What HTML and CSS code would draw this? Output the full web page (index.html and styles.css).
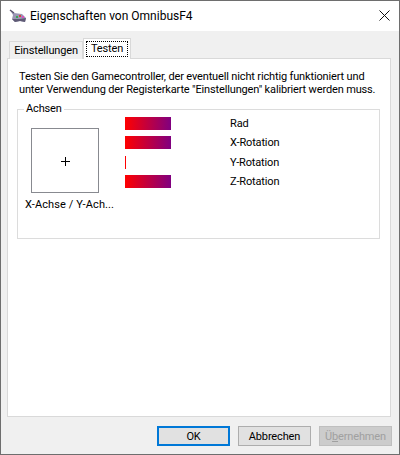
FILE: index.html
```html
<!DOCTYPE html>
<html lang="de">
<head>
  <meta charset="UTF-8">
  <meta name="viewport" content="width=device-width, initial-scale=1.0">
  <title>Eigenschaften von OmnibusF4</title>
  <link rel="stylesheet" href="styles.css">
</head>
<body>
  <div class="window">

    <div class="titlebar">
      <svg class="app_icon" width="18" height="15" viewBox="0 0 18 15">
        <path d="M1 1 L5 4 L13 5 L17 9 L16 13 L11 12 L6 13 L3 10 L4 6 Z" fill="#9a96b4"/>
        <path d="M3 10 L6 13 L11 12 L16 13 L17 9 L11 10 Z" fill="#5f5b75"/>
        <path d="M1 1 L5 4" stroke="#55506b" stroke-width="1.4"/>
        <rect x="7" y="7" width="2" height="2" fill="#3aa655"/>
        <rect x="10" y="6" width="2" height="2" fill="#d8433f"/>
        <rect x="13" y="7" width="2" height="2" fill="#d84fc0"/>
      </svg>
      <span class="title">Eigenschaften von OmnibusF4</span>
      <svg class="close" width="11" height="11" viewBox="0 0 11 11">
        <path d="M0.5 0.5 L10.5 10.5 M10.5 0.5 L0.5 10.5" stroke="#111" stroke-width="1" fill="none"/>
      </svg>
    </div>

    <div class="content">
      <div class="tabs">
        <div class="tab">Einstellungen</div>
        <div class="tab active"><span class="focus">Testen</span></div>
      </div>

      <div class="panel">
        <p class="intro">Testen Sie den Gamecontroller, der eventuell nicht richtig funktioniert und<br>unter Verwendung der Registerkarte "Einstellungen" kalibriert werden muss.</p>

        <fieldset class="group">
          <legend>Achsen</legend>
          <div class="axes">
            <div class="stick">
              <div class="stick_box">
                <svg width="9" height="9" viewBox="0 0 9 9">
                  <path d="M4.5 0 V9 M0 4.5 H9" stroke="#000" stroke-width="1"/>
                </svg>
              </div>
              <div class="stick_label">X-Achse / Y-Ach...</div>
            </div>
            <div class="sliders">
              <div class="bar_track"><div class="bar" style="width: 46px"></div></div>
              <div class="slider_label">Rad</div>
              <div class="bar_track"><div class="bar" style="width: 46px"></div></div>
              <div class="slider_label">X-Rotation</div>
              <div class="bar_track"><div class="bar" style="width: 1px"></div></div>
              <div class="slider_label">Y-Rotation</div>
              <div class="bar_track"><div class="bar" style="width: 46px"></div></div>
              <div class="slider_label">Z-Rotation</div>
            </div>
          </div>
        </fieldset>
      </div>

      <div class="buttons">
        <button class="default">OK</button>
        <button>Abbrechen</button>
        <button disabled>Ü<u>b</u>ernehmen</button>
      </div>
    </div>

  </div>
</body>
</html>
```

FILE: styles.css
```css
* {
  box-sizing: border-box;
}

html, body {
  margin: 0;
  padding: 0;
}

body {
  font-family: Roboto, "Noto Sans", Arial, sans-serif;
  font-size: 11px;
  letter-spacing: -0.15px;
  color: #000;
}

.window {
  display: flex;
  flex-direction: column;
  width: 400px;
  height: 455px;
  border: 1px solid #6e6e6e;
  background-color: #f0f0f0;
}

.titlebar {
  display: flex;
  align-items: center;
  height: 30px;
  padding: 0 9px 0 8px;
  background-color: #fff;
}

.app_icon {
  margin-right: 3px;
}

.title {
  flex: 1;
  font-size: 12px;
  letter-spacing: 0;
}

.close {
  margin-bottom: 2px;
}

.content {
  display: flex;
  flex-direction: column;
  flex: 1;
  padding: 7px 7px 8px 6px;
}

.tabs {
  display: flex;
  align-items: flex-end;
  height: 21px;
  padding-left: 2px;
  margin-bottom: -1px;
  margin-right: 1px;
  position: relative;
}

.tab {
  width: 74px;
  height: 18px;
  line-height: 17px;
  text-align: center;
  background-color: #f0f0f0;
  border: 1px solid #d9d9d9;
  border-bottom: none;
}

.tab.active {
  width: 48px;
  height: 21px;
  padding: 2px;
  background-color: #fff;
}

.focus {
  display: block;
  height: 16px;
  line-height: 14px;
  border: 1px dotted #000;
}

.panel {
  flex: 1;
  margin-right: 1px;
  padding: 11px 10px 0 9px;
  background-color: #fff;
  border: 1px solid #d9d9d9;
}

.intro {
  margin: 0 0 6px 2px;
  line-height: 13px;
  white-space: nowrap;
}

.group {
  height: 137px;
  margin: 0;
  padding: 0 0 0 7px;
  border: 1px solid #dcdcdc;
  min-width: 0;
}

.group legend {
  padding: 0 2px;
  margin-left: -1px;
  line-height: 14px;
}

.axes {
  display: flex;
}

.stick {
  width: 100px;
  padding-top: 12px;
}

.stick_box {
  display: flex;
  align-items: center;
  justify-content: center;
  width: 68px;
  height: 65px;
  margin-left: 6px;
  padding: 2px 0 0 1px;
  border: 1px solid #888a90;
}

.stick_label {
  margin-top: 5px;
  letter-spacing: 0.1px;
  white-space: nowrap;
}

.sliders {
  display: grid;
  grid-template-columns: 105px auto;
  grid-auto-rows: 13px;
  row-gap: 6.4px;
  padding-top: 1px;
}

.bar_track {
  height: 13px;
}

.bar {
  height: 13px;
  background: linear-gradient(to right, #ff0000, #800080) no-repeat;
  background-size: 46px 100%;
}

.slider_label {
  line-height: 14px;
  white-space: nowrap;
}

.buttons {
  display: flex;
  justify-content: flex-end;
  gap: 8px;
  padding-top: 9px;
}

button {
  width: 73px;
  height: 20px;
  padding: 0;
  font-family: inherit;
  font-size: 11px;
  letter-spacing: inherit;
  color: #000;
  background-color: #e1e1e1;
  border: 1px solid #adadad;
}

button.default {
  border: 2px solid #0078d7;
}

button:disabled {
  color: #a0a0a0;
  background-color: #cccccc;
  border-color: #bfbfbf;
}
```
